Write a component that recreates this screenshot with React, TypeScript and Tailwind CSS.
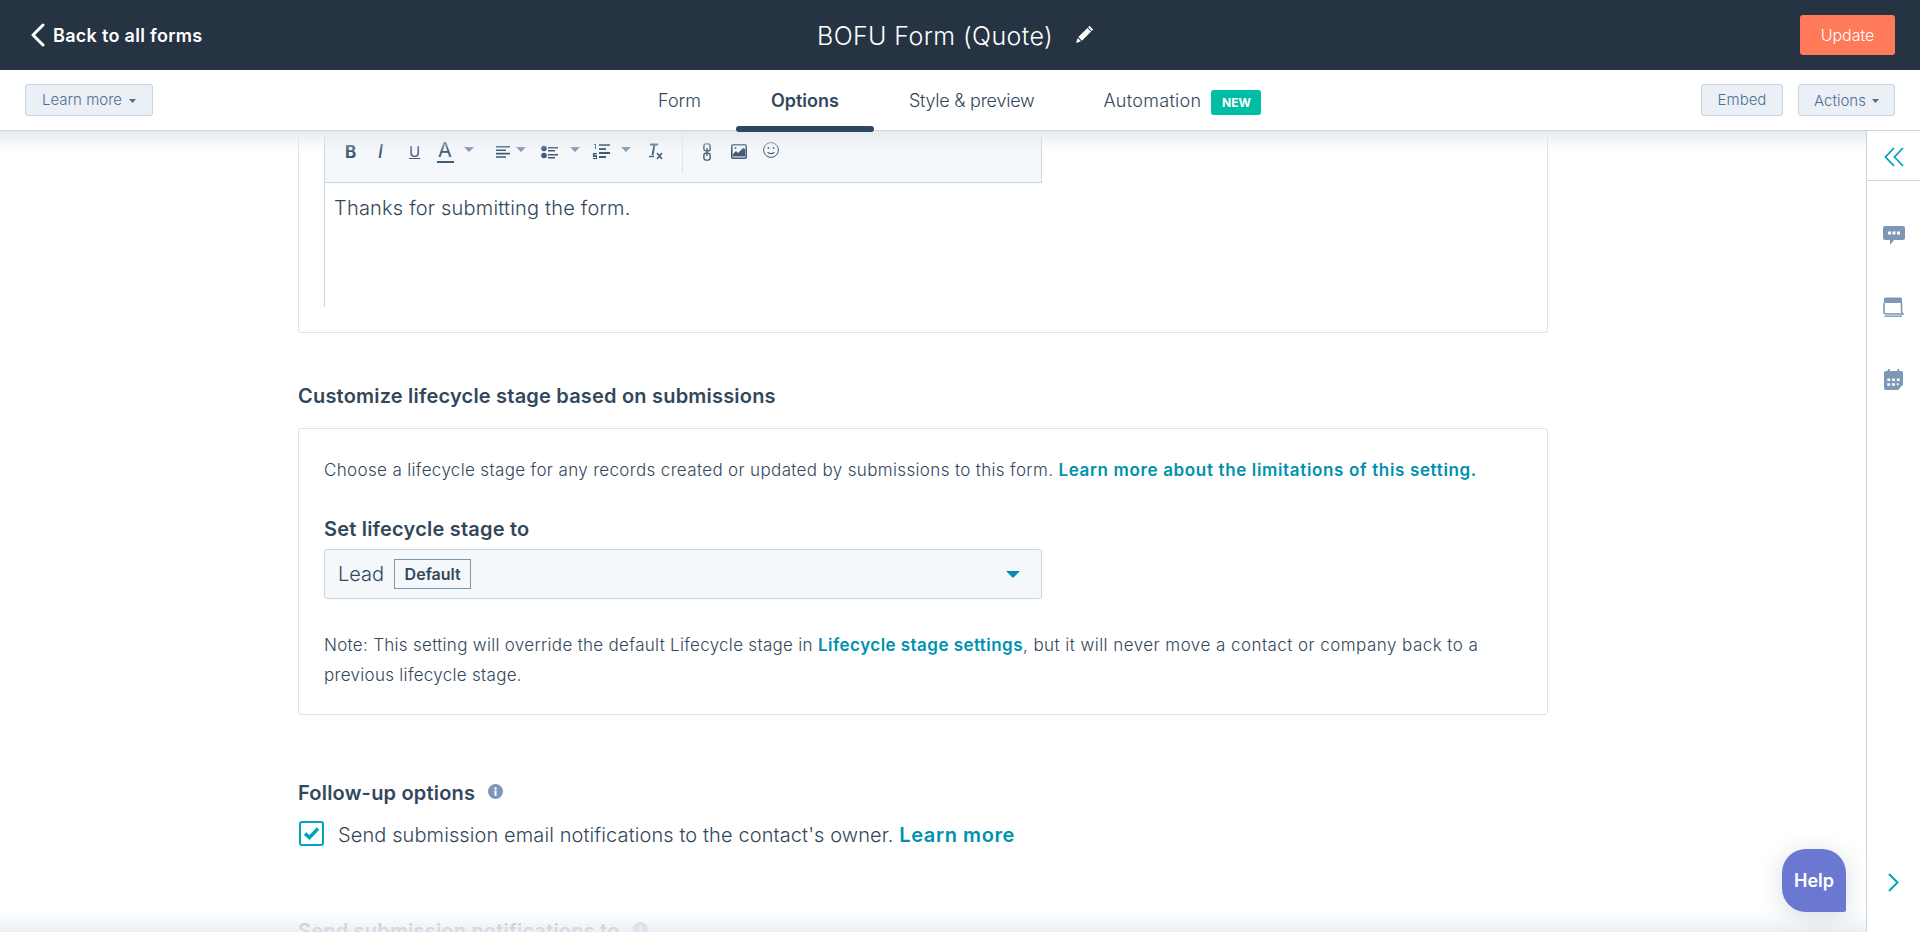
import React from "react";

const Caret = ({ className = "" }: { className?: string }) => (
  <svg viewBox="0 0 10 6" className={className} fill="currentColor" preserveAspectRatio="none"><path d="M0 0h10L5 6z" /></svg>
);

const Info = () => (
  <svg viewBox="0 0 16 16" className="mb-[3px] ml-[13px] h-[15px] w-[15px]"><circle cx="8" cy="8" r="8" fill="#7c98b6" /><rect x="6.9" y="7" width="2.2" height="5.5" fill="#fff" /><circle cx="8" cy="4.700" r="1.300" fill="#fff" /></svg>
);

const Tab = ({ label, active, className = "" }: { label: string; active?: boolean; className?: string }) => (
  <div className={`relative flex h-full items-center px-[35px] pt-[2px] text-[18px] ${active ? "font-semibold" : "font-light"} text-[#33475b] ${className}`}>
    {label}
    {active && <div className="absolute bottom-[-3px] left-0 right-0 h-[6px] rounded-[3px] bg-[#2d4561]" />}
  </div>
);

function Toolbar() {
  return (
    <div className="flex h-[52px] w-full items-start border-x border-b border-[#cbd6e2] bg-[#f5f8fa] pl-[20px] text-[#425b76]">
      <span className="mt-[10px] w-[32px] text-[17px] font-bold leading-[22px]">B</span>
      <span className="mt-[10px] w-[32px] pl-[1px] text-[18px] font-medium italic leading-[22px]">I</span>
      <span className="mt-[10px] w-[24px] text-[15px] font-normal leading-[22px] underline">U</span>
      <span className="mt-[8px] flex w-[24px] flex-col items-center">
        <span className="text-[20px] leading-[22px]">A</span>
        <span className="h-[2px] w-[17px] bg-[#425b76]" />
      </span>
      <Caret className="ml-[7px] mt-[16px] h-[5px] w-[10px] text-[#7c98b6]" />
      <svg viewBox="0 0 14 14" className="ml-[22px] mt-[13px] h-[16px] w-[14px]" fill="#425b76"><path d="M0 1h14v1.600H0zM0 4.400h10V6H0zM0 7.800h14v1.600H0zM0 11.200h10v1.600H0z" /></svg>
      <Caret className="ml-[6px] mt-[16px] h-[5px] w-[10px] text-[#7c98b6]" />
      <svg viewBox="0 0 17 14" className="ml-[15px] mt-[13px] h-[16px] w-[17px]" fill="#425b76"><circle cx="3" cy="3.500" r="2.800" /><circle cx="3" cy="10.500" r="2.800" /><path d="M7 2h10v1.600H7zM7 5h7v1.400H7zM7 9h10v1.600H7zM7 12h7v1.400H7z" /></svg>
      <Caret className="ml-[12px] mt-[16px] h-[5px] w-[10px] text-[#7c98b6]" />
      <svg viewBox="0 0 17 16" className="ml-[13px] mt-[12px] h-[16px] w-[17px]" fill="#425b76"><path d="M1 1h2v5H2V2H1zM0 10h4v1.200H1.600v1H4V16H0v-1h3v-1H0zM6 1h11v2H6zM6 5h7v2H6zM6 9h11v2H6zM6 13h7v2H6z" /></svg>
      <Caret className="ml-[11px] mt-[16px] h-[5px] w-[10px] text-[#7c98b6]" />
      <svg viewBox="0 0 14 18" className="ml-[18px] mt-[12px] h-[18px] w-[14px]" fill="none" stroke="#425b76"><path d="M1 1.500h8" strokeWidth="2" /><path d="M5.500 1.500 3.500 12" strokeWidth="1.800" /><path d="M0 13.500h5" strokeWidth="1.400" /><path d="m8 10 5 6M13 10l-5 6" strokeWidth="1.500" /></svg>
      <div className="ml-[19px] h-[42px] w-px bg-[#dfe3eb]" />
      <svg viewBox="0 0 8 18" className="ml-[20px] mt-[12px] h-[18px] w-[8px]" fill="none" stroke="#425b76" strokeWidth="1.400"><rect x="0.900" y="0.900" width="6.200" height="7" rx="2" /><rect x="0.900" y="10.100" width="6.200" height="7" rx="2" /><path d="M4 5v8" /></svg>
      <svg viewBox="0 0 16 15" className="ml-[20px] mt-[13px] h-[15px] w-[16px]"><rect x="0.800" y="0.800" width="14.400" height="13.400" rx="1" fill="#f5f8fa" stroke="#425b76" strokeWidth="1.600" /><path d="M2 12.500V10l3-3 2 2 5-5 2 1v7.500z" fill="#425b76" /><circle cx="4.500" cy="4" r="1" fill="#425b76" /></svg>
      <svg viewBox="0 0 16 18" className="ml-[16px] mt-[10px] h-[18px] w-[16px]" fill="none" stroke="#425b76" strokeWidth="1"><circle cx="8" cy="9" r="7.400" /><circle cx="5.400" cy="7" r="0.900" fill="#425b76" stroke="none" /><circle cx="10.600" cy="7" r="0.900" fill="#425b76" stroke="none" /><path d="M4.600 11.200c1.800 2 5 2 6.800 0" strokeWidth="1.200" /></svg>
    </div>
  );
}

export default function App() {
  return (
    <div className="flex h-[932px] w-full flex-col overflow-hidden bg-white font-['Inter',sans-serif] text-[#33475b]">
      <header className="flex h-[70px] shrink-0 items-center bg-[#253342] text-white">
        <div className="flex w-[817px] items-center pl-[30px]">
          <svg viewBox="0 0 15 24" className="h-[24px] w-[15px]" fill="none" stroke="#fff" strokeWidth="3" strokeLinecap="round" strokeLinejoin="round"><path d="M13 2 3 12l10 10" /></svg>
          <span className="ml-[8px] text-[18px] font-semibold tracking-[0.3px]">Back to all forms</span>
        </div>
        <h1 className="mt-[3px] text-[25px] font-light tracking-[0.4px]">BOFU Form (Quote)</h1>
        <svg viewBox="0 0 18 18" className="mb-[3px] ml-[23px] h-[18px] w-[18px]" fill="#fff"><path d="M13.500.8 17.200 4.500 15.800 5.900 12.100 2.200zM11.400 2.900 15.100 6.600 6 15.700 2.300 12zM1.700 13 5 16.300 0 18z" /></svg>
        <button className="ml-auto mr-[25px] h-[40px] w-[95px] rounded-[3px] bg-[#ff7a59] text-[16px] font-light text-white">Update</button>
      </header>

      <nav className="relative z-20 flex h-[61px] shrink-0 items-center border-b border-[#cbd6e2] bg-white pb-px">
        <div className="w-[623px] pl-[25px]">
          <button className="flex h-[32px] w-[128px] items-center justify-center gap-[7px] rounded-[3px] border border-[#cbd6e2] bg-[#eaf0f6] pt-[2px] text-[15px] font-light text-[#506e91]">
            Learn more <Caret className="h-[4px] w-[7px]" />
          </button>
        </div>
        <div className="flex h-full items-center">
          <Tab label="Form" />
          <Tab label="Options" active />
          <Tab label="Style & preview" className="tracking-[-0.25px]" />
          <div className="flex h-full items-center pl-[34px] pt-[2px] text-[18px] font-light tracking-[0.3px]">
            Automation
            <span className="ml-[10px] mt-[4px] flex h-[25px] w-[50px] items-center justify-center rounded-[3px] bg-[#00bda5] text-[12px] font-bold tracking-normal text-white">NEW</span>
          </div>
        </div>
        <div className="ml-auto flex items-center gap-[15px] pr-[25px]">
          <button className="h-[32px] w-[82px] rounded-[3px] border border-[#cbd6e2] bg-[#eaf0f6] pt-[2px] text-[15px] font-light text-[#506e91]">Embed</button>
          <button className="mt-px flex h-[32px] w-[97px] items-center justify-center gap-[6px] rounded-[3px] border border-[#cbd6e2] bg-[#eaf0f6] pt-[2px] text-[15px] font-light text-[#506e91]">
            Actions <Caret className="h-[4px] w-[7px]" />
          </button>
        </div>
      </nav>

      <div className="flex min-h-0 flex-1">
        <main className="relative min-w-0 flex-1 overflow-hidden pl-[298px]">
          <div className="w-[1250px]">
            <section className="rounded-b-[3px] border-x border-b border-[#dfe3eb] px-[25px] pb-[25px]">
              <div className="w-[718px]">
                <Toolbar />
                <div className="h-[124px] border-l border-[#cbd6e2] pl-[9px] pt-[10px] text-[20px] font-light leading-[30px] tracking-[0.2px]">Thanks for submitting the form.</div>
              </div>
            </section>

            <h2 className="mt-[51px] text-[20px] font-semibold leading-[24px] tracking-[0.2px]">Customize lifecycle stage based on submissions</h2>

            <section className="mt-[20px] rounded-[3px] border border-[#dfe3eb] px-[25px] pb-[24px] pt-[26px]">
              <p className="text-[17px] font-light leading-[30px] tracking-[0.35px]">
                Choose a lifecycle stage for any records created or updated by submissions to this form.{" "}
                <a className="font-semibold tracking-[0.65px] text-[#0091ae]">Learn more about the limitations of this setting.</a>
              </p>
              <div className="mt-[32px] text-[20px] font-semibold leading-[24px] tracking-[0.2px]">Set lifecycle stage to</div>
              <div className="mt-[8px] flex h-[50px] w-[718px] items-center rounded-[3px] border border-[#cbd6e2] bg-[#f5f8fa] pl-[13px] pr-[21px]">
                <span className="text-[20px] font-light">Lead</span>
                <span className="ml-[10px] flex h-[30px] w-[77px] items-center justify-center border border-[#7c98b6] text-[16px] font-semibold">Default</span>
                <Caret className="ml-auto h-[7px] w-[14px] text-[#0091ae]" />
              </div>
              <p className="mt-[31px] w-[1198px] text-[17px] font-light leading-[30px] tracking-[0.3px]">
                Note: This setting will override the default Lifecycle stage in{" "}
                <a className="font-semibold tracking-[0.45px] text-[#0091ae]">Lifecycle stage settings</a>
                <span className="tracking-[0.45px]">, but it will never move a contact or company back to a</span> previous lifecycle stage.
              </p>
            </section>

            <div className="mt-[66px] flex h-[24px] items-center">
              <span className="text-[20px] font-semibold leading-[24px] tracking-[0.2px]">Follow-up options</span>
              <Info />
            </div>
            <div className="mt-[16px] flex h-[25px] items-center pl-px">
              <div className="flex h-[25px] w-[25px] items-center justify-center rounded-[3px] border-2 border-[#00a4bd]">
                <svg viewBox="0 0 15 13" className="h-[13px] w-[15px]" fill="none" stroke="#00a4bd" strokeWidth="3.500"><path d="m1 6.500 4.500 4L14 1.500" /></svg>
              </div>
              <span className="ml-[14px] mt-[2px] text-[20px] font-light tracking-[0.1px]">
                Send submission email notifications to the contact's owner.{" "}
                <a className="font-semibold tracking-[0.6px] text-[#0091ae]">Learn more</a>
              </span>
            </div>
            <div className="mt-[73px] flex h-[24px] items-center">
              <span className="text-[20px] font-semibold leading-[24px] tracking-[0.2px]">Send submission notifications to</span>
              <Info />
            </div>
          </div>

          <div className="pointer-events-none absolute inset-x-0 top-0 h-[20px] bg-gradient-to-b from-[#e6ebf1] to-transparent" />
          <div className="pointer-events-none absolute inset-x-0 bottom-0 h-[24px] bg-gradient-to-t from-[#e9eef3]/90 via-[#f5f8fa]/75 to-transparent" />

          <button className="absolute right-[20px] top-[718px] flex h-[63px] w-[64px] items-center justify-center rounded-[24px] rounded-br-[2px] bg-[#6a78d1] text-[18px] font-semibold text-white shadow-[0_4px_24px_rgba(45,62,80,0.18)]">Help</button>
        </main>

        <aside className="flex w-[54px] shrink-0 flex-col items-center border-l border-[#cbd6e2]">
          <div className="flex h-[50px] w-full shrink-0 items-center justify-center border-b border-[#cbd6e2] pt-[2px]">
            <svg viewBox="0 0 20 20" className="h-[20px] w-[20px]" fill="none" stroke="#00a4bd" strokeWidth="1.800"><path d="M10 1 1.500 10l8.500 9M19 1l-8.500 9 8.500 9" /></svg>
          </div>
          <svg viewBox="0 0 22 19" className="mt-[45px] h-[19px] w-[22px]" fill="#7c98b6"><path d="M2 0h18a2 2 0 0 1 2 2v10a2 2 0 0 1-2 2H11l-4 5v-5H2a2 2 0 0 1-2-2V2a2 2 0 0 1 2-2z" /><path d="M5 5.500h3v3H5zM9.500 5.500h3v3h-3zM14 5.500h3v3h-3z" fill="#fff" /></svg>
          <svg viewBox="0 0 21 20" className="mt-[52px] h-[20px] w-[21px]" fill="none"><path d="M1 6V2A1.500 1.500 0 0 1 2.500.5h15A1.500 1.500 0 0 1 19 2v4z" fill="#7c98b6" /><path d="M1 6v9c0 1.200.6 2 2 2h17c-1-.8-1.500-2-1.500-3.500V6" stroke="#7c98b6" strokeWidth="1.600" /><path d="M1.500 19.200H19" stroke="#7c98b6" strokeWidth="1.400" /></svg>
          <svg viewBox="0 0 20 22" className="mt-[52px] h-[21px] w-[19px]" fill="#7c98b6"><path d="M4 0h2v3H4zM14 0h2v3h-2z" /><path d="M2 2h16a2 2 0 0 1 2 2v12l-5 6H2a2 2 0 0 1-2-2V4a2 2 0 0 1 2-2z" /><path d="M3.500 10h3v2.500h-3zM8.500 10h3v2.500h-3zM13.500 10h3v2.500h-3zM3.500 15h3v2.500h-3zM8.500 15h3v2.500h-3zM13.500 15h2v2h-2z" fill="#fff" /></svg>
          <svg viewBox="0 0 11 19" className="mb-[40px] mt-auto h-[19px] w-[11px]" fill="none" stroke="#00a4bd" strokeWidth="2"><path d="m1 1 8.500 8.500L1 18" /></svg>
        </aside>
      </div>
    </div>
  );
}
